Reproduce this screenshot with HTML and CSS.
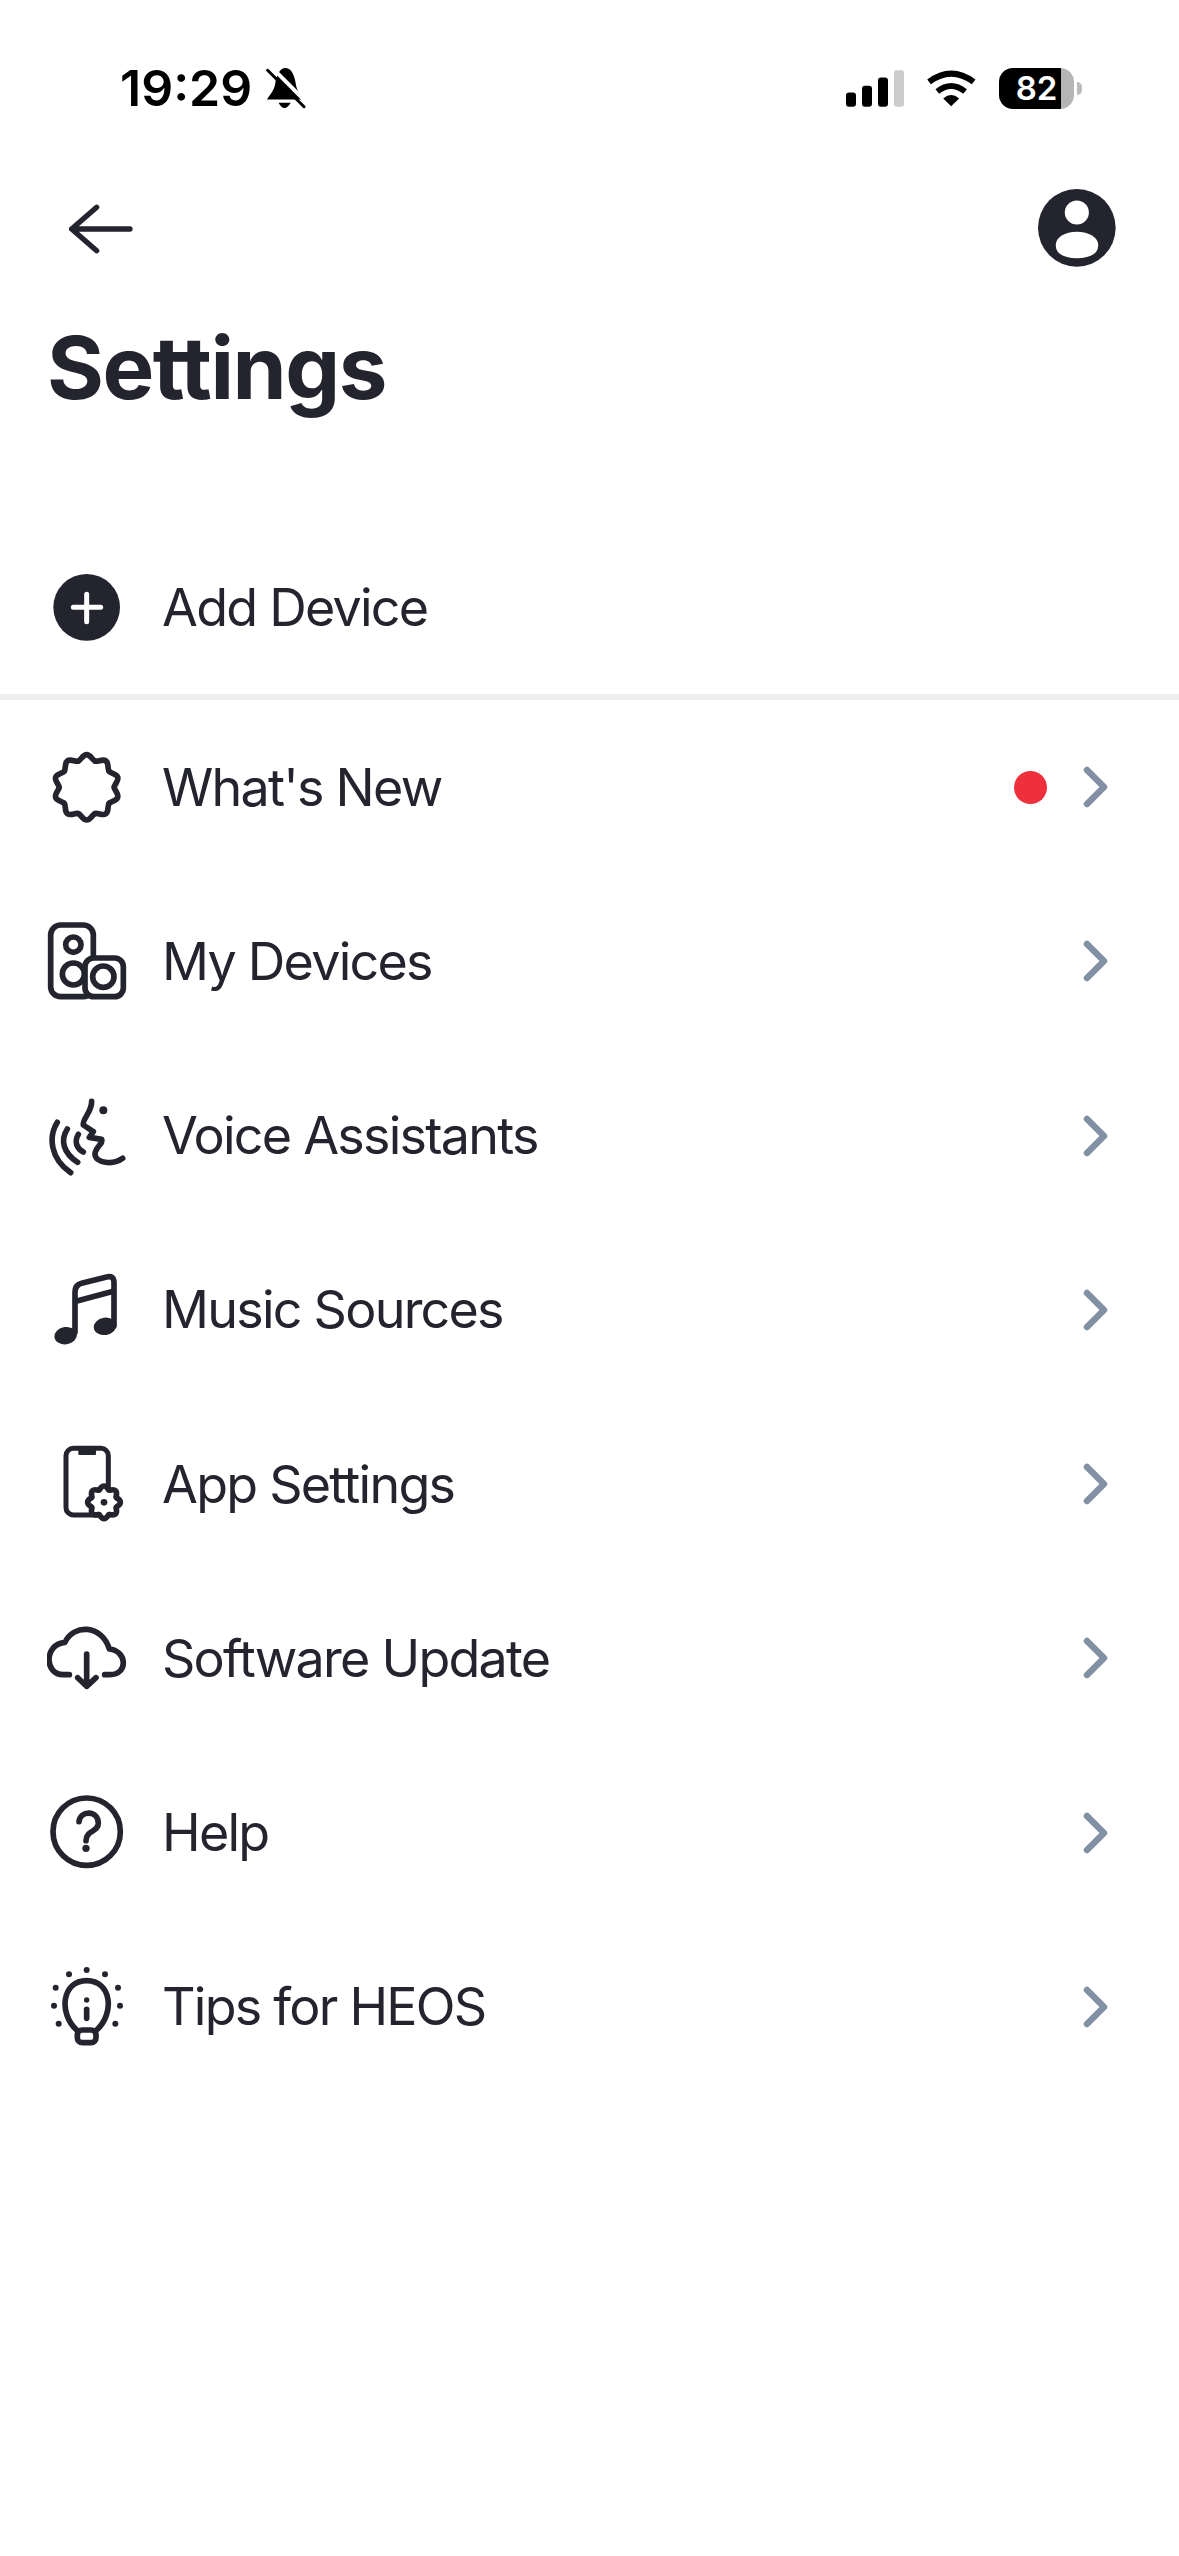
FILE: index.html
```html
<!DOCTYPE html>
<html lang="en">
<head>
<meta charset="utf-8">
<title>Settings</title>
<link rel="stylesheet" href="styles.css">
</head>
<body>
<main class="screen">
  <header class="status">
    <div class="status-left">
      <span class="time">19:29</span>
      <svg class="bell" viewBox="798 80 122 130">
        <path d="M858 83C875 83 885 100 890 130C892 150 905 165 910 178L803 178C815 160 825 150 828 130C832 100 845 83 858 83Z"/>
        <path d="M838 188Q855 220 875 188Z"/>
        <path class="slash-gap" d="M812 76L925 189"/>
        <path class="slash" d="M805 90L915 200"/>
      </svg>
    </div>
    <div class="status-right">
      <svg class="signal" viewBox="198 88 174 110">
        <rect x="198" y="155" width="30" height="43" rx="9"/>
        <rect x="246" y="135" width="30" height="63" rx="9"/>
        <rect x="294" y="110" width="30" height="88" rx="9"/>
        <rect class="bar-off" x="342" y="88" width="30" height="110" rx="7"/>
      </svg>
      <svg class="wifi" viewBox="438 85 154 115">
        <path class="wifi-arc" d="M447 124Q514 74 582 124"/>
        <path class="wifi-arc" d="M472 153Q514 120 556 153"/>
        <path d="M490 174Q514 154 538 174L514 198Z"/>
      </svg>
      <div class="battery">82</div>
    </div>
  </header>

  <nav class="topbar">
    <svg class="back" viewBox="141 444 300 240">
      <path d="M390 567H215M290 502L215 567L290 632"/>
    </svg>
    <svg class="profile" viewBox="775 445 233 233">
      <circle class="ink" cx="891" cy="561" r="116"/>
      <circle class="paper" cx="891" cy="515" r="36"/>
      <path class="paper" d="M828 612C828 590 855 573 891 573C927 573 955 590 955 612Q955 650 891 652Q828 650 828 612Z"/>
    </svg>
  </nav>

  <h1 class="title">Settings</h1>

  <section class="add-row row">
    <svg class="icon" viewBox="51 81 240 240">
      <circle class="ink" cx="170" cy="202" r="100"/>
      <path class="plus" d="M130 202H212M170 163V245"/>
    </svg>
    <span class="label">Add Device</span>
  </section>
  <hr class="rule">

  <ul class="menu">
    <li class="row">
      <svg class="icon line" viewBox="51 54 240 240">
        <defs>
          <path id="petal" d="M-25.6 -78.7C-17 -81.5 -12 -98 0 -98C12 -98 17 -81.5 25.6 -78.7"/>
        </defs>
        <g transform="translate(170 175)">
          <use href="#petal"/>
          <use href="#petal" transform="rotate(36)"/>
          <use href="#petal" transform="rotate(72)"/>
          <use href="#petal" transform="rotate(108)"/>
          <use href="#petal" transform="rotate(144)"/>
          <use href="#petal" transform="rotate(180)"/>
          <use href="#petal" transform="rotate(216)"/>
          <use href="#petal" transform="rotate(252)"/>
          <use href="#petal" transform="rotate(288)"/>
          <use href="#petal" transform="rotate(324)"/>
        </g>
      </svg>
      <span class="label">What's New</span>
      <span class="dot"></span>
      <svg class="chevron" viewBox="0 0 40 60"><path d="M11 13L28 30L11 47"/></svg>
    </li>
    <li class="row">
      <svg class="icon line" viewBox="51 66 240 240">
        <rect x="62" y="78" width="128" height="215" rx="30"/>
        <circle cx="130" cy="137" r="23"/>
        <circle cx="130" cy="225" r="33"/>
        <rect class="knockout" x="165" y="177" width="115" height="116" rx="26"/>
        <circle cx="220" cy="233" r="32"/>
      </svg>
      <span class="label">My Devices</span>
      <svg class="chevron" viewBox="0 0 40 60"><path d="M11 13L28 30L11 47"/></svg>
    </li>
    <li class="row">
      <svg class="icon line" viewBox="51 48 240 240">
        <path d="M185 64C186 95 155 120 160 135L190 155L178 172L215 178C222 188 195 203 195 222C195 250 250 256 278 235"/>
        <path d="M82 127C55 170 60 235 122 278"/>
        <path d="M112 147C90 180 100 220 143 247"/>
        <path d="M145 163C132 185 140 205 160 216"/>
        <circle class="fill-ink" cx="220" cy="91" r="12"/>
      </svg>
      <span class="label">Voice Assistants</span>
      <svg class="chevron" viewBox="0 0 40 60"><path d="M11 13L28 30L11 47"/></svg>
    </li>
    <li class="row">
      <svg class="icon line" viewBox="51 63 240 240">
        <path d="M135 250V130Q135 108 155 103L230 84Q252 79 252 101V230"/>
        <path d="M138 157L250 127"/>
        <ellipse class="fill-ink" cx="107" cy="260" rx="34" ry="26" transform="rotate(-8 107 260)"/>
        <ellipse class="fill-ink" cx="225" cy="232" rx="34" ry="26" transform="rotate(-8 225 232)"/>
      </svg>
      <span class="label">Music Sources</span>
      <svg class="chevron" viewBox="0 0 40 60"><path d="M11 13L28 30L11 47"/></svg>
    </li>
    <li class="row">
      <svg class="icon line" viewBox="51 75 240 240">
        <rect class="thin" x="108" y="88" width="127" height="200" rx="22"/>
        <rect class="fill-ink" x="145" y="88" width="53" height="20" rx="3"/>
        <g transform="translate(222 250)">
          <circle class="blank" r="44"/>
          <path id="cog" d="M-15.3 -37C-11 -39 -9 -49 0 -49C9 -49 11 -39 15.3 -37"/>
          <use href="#cog" transform="rotate(45)"/>
          <use href="#cog" transform="rotate(90)"/>
          <use href="#cog" transform="rotate(135)"/>
          <use href="#cog" transform="rotate(180)"/>
          <use href="#cog" transform="rotate(225)"/>
          <use href="#cog" transform="rotate(270)"/>
          <use href="#cog" transform="rotate(315)"/>
          <circle class="fill-ink" r="10"/>
        </g>
      </svg>
      <span class="label">App Settings</span>
      <svg class="chevron" viewBox="0 0 40 60"><path d="M11 13L28 30L11 47"/></svg>
    </li>
    <li class="row">
      <svg class="icon line" viewBox="51 57 240 240">
        <path d="M118 227H100C42 227 42 135 105 130C130 75 215 75 238 150C292 155 295 227 240 227H224"/>
        <path d="M170 165V262M143 236L170 262L198 236"/>
      </svg>
      <span class="label">Software Update</span>
      <svg class="chevron" viewBox="0 0 40 60"><path d="M11 13L28 30L11 47"/></svg>
    </li>
    <li class="row">
      <svg class="icon line" viewBox="51 54 240 240">
        <circle cx="170" cy="170" r="101"/>
        <path d="M147 140C150 105 205 105 205 145C205 172 168 165 168 197"/>
        <circle class="fill-ink" cx="168" cy="220" r="11"/>
      </svg>
      <span class="label">Help</span>
      <svg class="chevron" viewBox="0 0 40 60"><path d="M11 13L28 30L11 47"/></svg>
    </li>
    <li class="row">
      <svg class="icon line" viewBox="51 51 240 240">
        <path d="M140 240C85 190 95 92 170 92C245 92 255 190 200 240"/>
        <rect x="142" y="240" width="56" height="38" rx="15"/>
        <path d="M170 178V205"/>
        <g class="fill-ink">
          <circle cx="170" cy="150" r="8"/>
          <circle cx="170" cy="60" r="9"/>
          <circle cx="117" cy="73" r="9"/>
          <circle cx="225" cy="73" r="9"/>
          <circle cx="77" cy="113" r="9"/>
          <circle cx="264" cy="113" r="9"/>
          <circle cx="72" cy="167" r="9"/>
          <circle cx="270" cy="167" r="9"/>
          <circle cx="86" cy="221" r="9"/>
          <circle cx="256" cy="221" r="9"/>
        </g>
      </svg>
      <span class="label">Tips for HEOS</span>
      <svg class="chevron" viewBox="0 0 40 60"><path d="M11 13L28 30L11 47"/></svg>
    </li>
  </ul>
</main>
</body>
</html>
```
FILE: styles.css
```css
* {
  box-sizing: border-box;
}

html,
body {
  margin: 0;
  background: #fff;
}

body {
  font-family: Inter, "Liberation Sans", sans-serif;
  color: #23242e;
}

.screen {
  width: 1179px;
  height: 2556px;
  overflow: hidden;
}

/* Status bar */
.status {
  height: 176px;
  display: flex;
  align-items: center;
  justify-content: space-between;
  padding: 0 97px 0 120px;
  color: #000;
}

.status-left,
.status-right {
  display: flex;
  align-items: center;
}

.status-right {
  gap: 22px;
}

.time {
  font-size: 50px;
  font-weight: 600;
  line-height: 1;
}

.bell {
  width: 41px;
  height: 43px;
  margin-left: 13px;
  fill: #000;
}

.slash-gap {
  fill: none;
  stroke: #fff;
  stroke-width: 12;
}

.slash {
  fill: none;
  stroke: #000;
  stroke-width: 9;
  stroke-linecap: round;
}

.signal {
  width: 58px;
  height: 37px;
  fill: #000;
}

.bar-off {
  fill: #ccc;
}

.wifi {
  width: 51px;
  height: 38px;
  fill: #000;
}

.wifi-arc {
  fill: none;
  stroke: #000;
  stroke-width: 18;
  stroke-linecap: butt;
}

.battery {
  position: relative;
  width: 75px;
  height: 41px;
  margin-right: 8px;
  border-radius: 14px;
  background: linear-gradient(to right, #000 83%, #b5b5b5 83%);
  color: #fff;
  font-size: 33px;
  font-weight: 600;
  line-height: 41px;
  text-align: center;
}

/* Battery terminal */
.battery::after {
  content: "";
  position: absolute;
  top: 14px;
  right: -8px;
  width: 5px;
  height: 13px;
  background: #bbb;
  border-radius: 0 6px 6px 0;
}

/* Top bar */
.topbar {
  height: 104px;
  display: flex;
  align-items: center;
  justify-content: space-between;
  padding: 0 63px 0 47px;
}

.back {
  width: 100px;
  height: 80px;
  fill: none;
  stroke: #23242e;
  stroke-width: 16;
  stroke-linecap: round;
  stroke-linejoin: round;
}

.profile {
  width: 78px;
  height: 78px;
}

.ink {
  fill: #23242e;
}

.paper {
  fill: #fff;
}

.title {
  margin: 0;
  height: 240px;
  padding: 38px 0 0 47px;
  font-size: 87px;
  font-weight: 700;
  line-height: 100px;
  letter-spacing: -1.5px;
}

/* Menu rows */
.row {
  height: 174.25px;
  display: flex;
  align-items: center;
  padding: 0 63px 0 47px;
}

.add-row {
  height: 174px;
}

.rule {
  height: 6px;
  margin: 0;
  border: 0;
  background: #eeeeef;
}

.menu {
  margin: 0;
  padding: 0;
  list-style: none;
}

.icon {
  width: 80px;
  height: 80px;
  flex: none;
  margin-right: 35px;
}

.line {
  fill: none;
  stroke: #23242e;
  stroke-width: 17;
  stroke-linecap: round;
  stroke-linejoin: round;
}

.plus {
  fill: none;
  stroke: #fff;
  stroke-width: 15;
  stroke-linecap: round;
}

.knockout {
  fill: #fff;
}

.fill-ink {
  fill: #23242e;
  stroke: none;
}

.thin {
  stroke-width: 15;
}

.blank {
  fill: #fff;
  stroke: none;
}

.label {
  flex: 1;
  padding-top: 1px;
  font-size: 52px;
  font-weight: 400;
  line-height: 64px;
  letter-spacing: -1.75px;
}

.dot {
  width: 33px;
  height: 33px;
  margin-right: 29px;
  border-radius: 50%;
  background: #ee2f3c;
}

.chevron {
  width: 40px;
  height: 60px;
  flex: none;
  fill: none;
  stroke: #8290a3;
  stroke-width: 6.5;
  stroke-linecap: round;
  stroke-linejoin: round;
}
```
